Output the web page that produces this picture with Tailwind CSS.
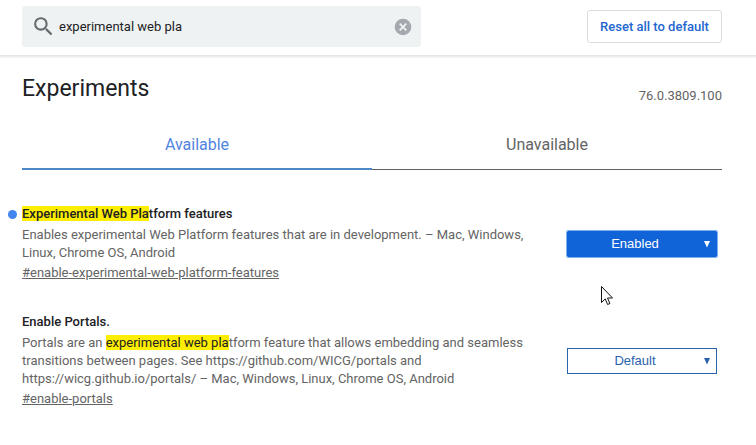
<!DOCTYPE html>
<html lang="en">
<head>
  <meta charset="UTF-8">
  <meta name="viewport" content="width=device-width, initial-scale=1.0">
  <title>Experiments</title>
  <script src="https://cdn.jsdelivr.net/npm/@tailwindcss/browser@4"></script>
</head>
<body class="bg-white font-[Roboto,sans-serif] text-[13px] leading-[18px] text-[#646464]">
  <!-- Search bar -->
  <header class="flex items-start justify-between h-[55px] pt-[6px] pl-[22px] pr-[34px] shadow-[0_1px_2px_1px_#e4e4e4]">
    <div class="flex items-center w-[57%] h-[41px] px-[9px] rounded-[3px] bg-[#eff2f3]">
      <label for="search" class="shrink-0" aria-label="Search flags">
        <svg class="w-[25px] h-[25px]" viewBox="0 0 24 24" fill="#66696d">
          <path d="M15.5 14h-.79l-.28-.27A6.47 6.47 0 0 0 16 9.5 6.5 6.5 0 1 0 9.5 16c1.61 0 3.09-.59 4.23-1.57l.27.28v.79l5 4.99L20.49 19l-4.99-5zm-6 0C7.01 14 5 11.99 5 9.5S7.01 5 9.5 5 14 7.01 14 9.5 11.99 14 9.5 14z"/>
        </svg>
      </label>
      <input type="text" id="search" value="experimental web pla" class="grow min-w-0 ml-[3px] text-[#202124] focus:outline-none">
      <button id="clear-search" class="shrink-0" aria-label="Clear search">
        <svg class="w-[18px] h-[18px]" viewBox="0 0 18 18">
          <circle cx="9" cy="9" r="8.3" fill="#a5a8ad"/>
          <path d="M5.7 5.7l6.6 6.6M12.3 5.7l-6.6 6.6" stroke="#eff2f3" stroke-width="1.9"/>
        </svg>
      </button>
    </div>
    <button id="reset-all" class="w-[135px] h-[33px] mt-[4px] border border-[#dadce0] rounded-[3px] font-medium text-[#2367cf]">Reset all to default</button>
  </header>

  <main class="pl-[22px] pr-[34px]">
    <div class="flex items-end justify-between pt-[18px]">
      <h1 class="text-[23px] leading-[32px] text-[#202124]">Experiments</h1>
      <span>76.0.3809.100</span>
    </div>

    <!-- Tabs -->
    <div class="grid grid-cols-2 h-[49px] mt-[16px] text-[16px]">
      <button class="border-b-2 border-[#4d87c7] text-[#4f84e0]">Available</button>
      <button class="border-b border-[#5f6063]">Unavailable</button>
    </div>

    <!-- Experiments list -->
    <section class="flex flex-col gap-[31px] mt-[35px]">
      <div class="flex items-center justify-between pr-[5px]">
        <div class="w-[510px]">
          <h2 class="relative font-medium text-[#202124]">
            <span class="absolute top-[5px] -left-[14px] w-[9px] h-[9px] rounded-full bg-[#4285ec]"></span>
            <mark class="bg-[#ffee00] text-[#202124]">Experimental Web Pla</mark>tform features
          </h2>
          <p class="mt-[3px]">Enables experimental Web Platform features that are in development. – Mac, Windows, Linux, Chrome OS, Android</p>
          <a href="#enable-experimental-web-platform-features" class="inline-block mt-[2px] underline">#enable-experimental-web-platform-features</a>
        </div>
        <div class="relative shrink-0">
          <select aria-label="Experimental Web Platform features" class="block appearance-none w-[150px] h-[26px] pr-[14px] bg-[#1064d8] border border-[#1064d8] rounded-[1px] outline outline-[#7fb0f2] font-['Liberation_Sans',sans-serif] text-center text-white">
            <option>Default</option>
            <option selected>Enabled</option>
            <option>Disabled</option>
          </select>
          <svg class="absolute top-[10px] right-[7px] w-[6px] h-[7px] pointer-events-none" viewBox="0 0 6 7" fill="#ffffff"><path d="M0 0h6L3 6.5z"/></svg>
        </div>
      </div>

      <div class="flex items-center justify-between pr-[5px]">
        <div class="w-[510px]">
          <h2 class="font-medium text-[#202124]">Enable Portals.</h2>
          <p class="mt-[3px]">Portals are an <mark class="bg-[#ffee00] text-[#202124]">experimental web pla</mark>tform feature that allows embedding and seamless transitions between pages. See https://github.com/WICG/portals and https://wicg.github.io/portals/ – Mac, Windows, Linux, Chrome OS, Android</p>
          <a href="#enable-portals" class="inline-block mt-[2px] underline">#enable-portals</a>
        </div>
        <div class="relative shrink-0">
          <select aria-label="Enable Portals" class="block appearance-none w-[150px] h-[26px] pr-[14px] bg-white border border-[#2a62ac] font-['Liberation_Sans',sans-serif] text-center text-[#2a62ac]">
            <option selected>Default</option>
            <option>Enabled</option>
            <option>Disabled</option>
          </select>
          <svg class="absolute top-[10px] right-[7px] w-[6px] h-[7px] pointer-events-none" viewBox="0 0 6 7" fill="#2a62ac"><path d="M0 0h6L3 6.5z"/></svg>
        </div>
      </div>
    </section>
  </main>

  <!-- Mouse pointer -->
  <svg class="absolute top-[286px] left-[601px] w-[12px] h-[20px]" viewBox="0 0 12 20">
    <path d="M.5.5v16l3.7-3.6 2.4 5.6 2.3-1-2.4-5.5h5z" fill="#ffffff" stroke="#111111"/>
  </svg>
</body>
</html>
